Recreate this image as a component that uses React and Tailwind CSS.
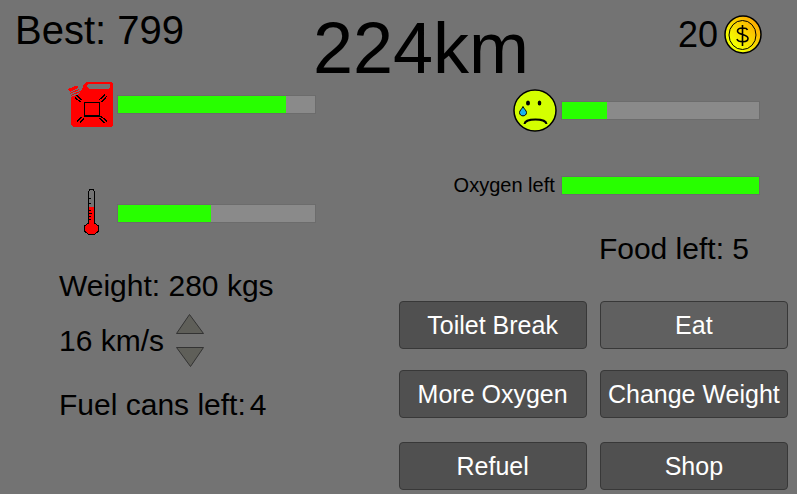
const FuelCan = () => (
    <svg viewBox="0 0 46 45" className="h-[45px] w-[46px]" shapeRendering="crispEdges" aria-hidden="true">
        <path
            fillRule="evenodd"
            fill="#ff0000"
            d="M18 0H43L45 2V43L43 45H5L3 43V15L11 12L14 7L16 2ZM21 2L19 3V5L21 7H41L42 5V3L41 2Z"
        />
        <path d="M0 7L9 3.500L10.500 6L2 10Z" fill="#ff0000" />
        <path d="M2 11.500L11 7.500M3 13.500L12 9.500" stroke="#ff0000" fill="none" />
        <path
            d="M16.500 20.500h15v13.500h-15zM8 13l6 5M7 15.500l5.500 4.500M37 12.500l-6 5.500M38.500 14.500l-5 5.500M14.500 34.500l-5.500 5M16 36.500l-4.500 5M31.500 36l5.500 5M32.500 34l7 5.500"
            stroke="#000"
            strokeWidth="1.300"
            fill="none"
        />
    </svg>
);

const Thermometer = () => (
    <svg viewBox="0 0 16 49" className="h-[49px] w-4" shapeRendering="crispEdges" aria-hidden="true">
        <path d="M5 18h7v18h-7z" fill="#ff0000" />
        <path d="M5 34L1.500 37V42L5.500 45.500H11.500L15.500 42V37L12 34Z" fill="#ff0000" />
        <path
            d="M5.500 34V2.500L7 .500H10L11.500 2.500V34L15.500 37V42L11.500 45.500H5.500L1.500 42V37L5.500 34"
            stroke="#000"
            fill="none"
        />
        <path d="M6 9.500h2M6 14.500h2M6 21.500h2M6 24.500h3M6 27.500h2M6 30.500h2" stroke="#000" fill="none" />
    </svg>
);

const SadFace = () => (
    <svg viewBox="0 0 44 43" className="h-[43px] w-11" aria-hidden="true">
        <ellipse cx="22" cy="21.5" rx="21" ry="20.5" fill="#d4ff00" stroke="#000" strokeWidth="1.500" />
        <ellipse cx="15" cy="14" rx="2" ry="2.500" />
        <ellipse cx="26.500" cy="14" rx="1.800" ry="2.500" />
        <path d="M11.500 35C12 29 33 29 33.500 35" stroke="#000" strokeWidth="2" fill="none" />
        <path
            d="M10 17.500C9 20 6.500 21.500 6.500 23.500C6.500 28 13.500 28 13.500 23.500C13.500 21.500 11 20 10 17.500Z"
            fill="#18b4f0"
            stroke="#000"
        />
    </svg>
);

const Coin = () => (
    <svg viewBox="0 0 38 40" className="h-10 w-[38px]" aria-hidden="true">
        <defs>
            <linearGradient id="coin" x1="0" y1="1" x2="1" y2="0">
                <stop offset="0.250" stopColor="#f4ff00" />
                <stop offset="0.900" stopColor="#ffa400" />
            </linearGradient>
        </defs>
        <ellipse cx="19" cy="19.500" rx="18" ry="18.500" fill="url(#coin)" stroke="#000" strokeWidth="1.500" />
        <ellipse cx="18.500" cy="20" rx="13.500" ry="14.500" fill="none" stroke="#000" />
        <path
            d="M23.500 15C22.500 12.500 14 12 13.500 16C13.500 20.500 24 18.500 24 23.500C24 28 14 27.500 13 24M18.500 10V31"
            fill="none"
            stroke="#000"
            strokeWidth="1.600"
        />
    </svg>
);

const Bar = ({ label, value }) => (
    <div
        role="progressbar"
        aria-label={label}
        aria-valuenow={value}
        className="h-[19px] w-[25vw] border border-[#6c6c6c] bg-[#8a8a8a]"
    >
        <div className="h-full bg-[#28ff00]" style={{ width: `${value}%` }} />
    </div>
);

const ActionButton = ({ children, active }) => (
    <button
        className={`h-12 whitespace-nowrap rounded-[4px] border border-[#383838] text-[25px] leading-[30px] text-white ${
            active ? 'bg-[#606060]' : 'bg-[#505050]'
        }`}
    >
        {children}
    </button>
);

const App = () => {
    return (
        <div className="min-h-screen bg-[#737373] font-['Liberation_Sans',Arial,sans-serif] text-black">
            <header className="flex h-20 items-start justify-between pl-[15px] pr-[35px]">
                <p className="mt-[10px] text-[40px] leading-10">Best: 799</p>
                <h1 className="mr-5 mt-4 text-[72px] leading-16">224km</h1>
                <div className="mt-[15px] flex items-center gap-[6px]">
                    <span className="text-[36px] leading-10">20</span>
                    <Coin />
                </div>
            </header>

            <main className="grid grid-cols-2">
                <section className="pt-[2px]">
                    <div className="flex items-center gap-[3px] pl-[68px]">
                        <FuelCan />
                        <Bar label="Fuel" value={85} />
                    </div>
                    <div className="mt-[62px] flex items-center gap-[3px] pl-[68px]">
                        <div className="flex w-[46px] justify-center">
                            <Thermometer />
                        </div>
                        <Bar label="Temperature" value={47} />
                    </div>

                    <div className="pl-[59px] text-[30px] leading-9">
                        <p className="mt-[30px]">Weight: 280 kgs</p>
                        <div className="mt-[10px] flex items-center gap-3">
                            <span>16 km/s</span>
                            <div className="flex flex-col gap-[13px]">
                                <button aria-label="Speed up">
                                    <svg viewBox="0 0 28 20" className="block h-5 w-7">
                                        <path d="M.5 19.500L13.500 .500L27.500 19.500Z" fill="#5f5f59" stroke="#333" />
                                    </svg>
                                </button>
                                <button aria-label="Slow down">
                                    <svg viewBox="0 0 28 20" className="block h-5 w-7">
                                        <path d="M.5 .500H27.500L14.500 19.500Z" fill="#5f5f59" stroke="#333" />
                                    </svg>
                                </button>
                            </div>
                        </div>
                        <p className="mt-5 flex gap-1">
                            <span>Fuel cans left:</span>
                            <span>4</span>
                        </p>
                    </div>
                </section>

                <section className="pt-[9px]">
                    <div className="flex items-center justify-end gap-1 pr-[37px]">
                        <SadFace />
                        <Bar label="Mood" value={23} />
                    </div>
                    <div className="mt-[41px] flex items-center justify-end gap-[6px] pr-[37px]">
                        <span className="text-[20px] leading-6">Oxygen left</span>
                        <Bar label="Oxygen left" value={100} />
                    </div>
                    <p className="mt-[34px] pr-12 text-right text-[30px] leading-9">Food left: 5</p>

                    <div className="mt-[34px] grid grid-cols-2 gap-x-[13px] gap-y-[21px] pr-[9px]">
                        <ActionButton>Toilet Break</ActionButton>
                        <ActionButton active>Eat</ActionButton>
                        <ActionButton>More Oxygen</ActionButton>
                        <ActionButton>Change Weight</ActionButton>
                    </div>
                    <div className="mt-6 grid grid-cols-2 gap-x-[13px] pr-[9px]">
                        <ActionButton>Refuel</ActionButton>
                        <ActionButton>Shop</ActionButton>
                    </div>
                </section>
            </main>
        </div>
    );
};

export default App;
